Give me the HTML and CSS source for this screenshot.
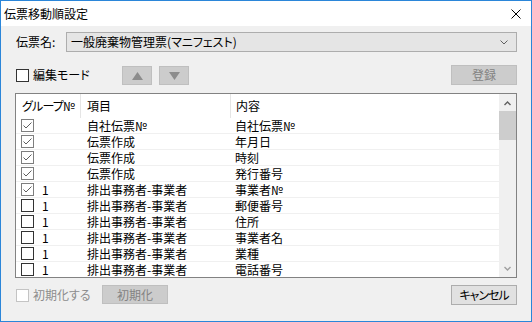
FILE: index.html
```html
<!DOCTYPE html>
<html lang="ja">
<head>
    <meta charset="UTF-8">
    <meta name="viewport" content="width=device-width, initial-scale=1.0">
    <title>伝票移動順設定</title>
    <link rel="stylesheet" href="styles.css">
</head>
<body>
    <div class="window">
        <div class="titlebar">
            <span class="title">伝票移動順設定</span>
            <svg class="close" width="10" height="10" viewBox="0 0 10 10">
                <path d="M0.5 0.5 L9.5 9.5 M9.5 0.5 L0.5 9.5" stroke="#000" stroke-width="1" fill="none"/>
            </svg>
        </div>
        <div class="content">
            <div class="row-name">
                <span class="name-label">伝票名:</span>
                <div class="combo">
                    <span class="palt">一般廃棄物管理票(マニフェスト)</span>
                    <svg class="chevron" width="8" height="5" viewBox="0 0 8 5">
                        <path d="M0.5 0.5 L4 4 L7.5 0.5" stroke="#606060" stroke-width="1" fill="none"/>
                    </svg>
                </div>
            </div>

            <div class="row-tools">
                <label class="check edit-mode"><span class="box"></span><span class="palt">編集モード</span></label>
                <button class="btn-arrow" disabled>
                    <svg width="11" height="8" viewBox="0 0 11 8"><polygon points="5.5,0 11,8 0,8" fill="#8c8c8c"/></svg>
                </button>
                <button class="btn-arrow" disabled>
                    <svg width="11" height="8" viewBox="0 0 11 8"><polygon points="0,0 11,0 5.5,8" fill="#8c8c8c"/></svg>
                </button>
                <button class="btn btn-disabled btn-save" disabled>登録</button>
            </div>

            <div class="list">
                <div class="list-main">
                    <div class="list-head">
                        <div class="cell palt head-group">グループ№</div>
                        <div class="cell">項目</div>
                        <div class="cell">内容</div>
                    </div>
                    <div class="list-body" id="list-body"></div>
                </div>
                <div class="scrollbar">
                    <svg width="7" height="5" viewBox="0 0 7 5"><path d="M0.5 4 L3.5 1 L6.5 4" stroke="#606060" stroke-width="1.4" fill="none"/></svg>
                    <div class="track"><div class="thumb"></div></div>
                    <svg width="7" height="5" viewBox="0 0 7 5"><path d="M0.5 1 L3.5 4 L6.5 1" stroke="#a0a0a0" stroke-width="1.4" fill="none"/></svg>
                </div>
            </div>

            <div class="row-bottom">
                <label class="check check-disabled"><span class="box"></span><span class="palt">初期化する</span></label>
                <button class="btn btn-disabled btn-reset" disabled>初期化</button>
                <button class="btn btn-cancel palt">キャンセル</button>
            </div>
        </div>
    </div>

    <script>
        const rows = [
            [true, '', '自社伝票№', '自社伝票№'],
            [true, '', '伝票作成', '年月日'],
            [true, '', '伝票作成', '時刻'],
            [true, '', '伝票作成', '発行番号'],
            [true, '1', '排出事務者-事業者', '事業者№'],
            [false, '1', '排出事務者-事業者', '郵便番号'],
            [false, '1', '排出事務者-事業者', '住所'],
            [false, '1', '排出事務者-事業者', '事業者名'],
            [false, '1', '排出事務者-事業者', '業種'],
            [false, '1', '排出事務者-事業者', '電話番号']
        ];

        const checkSvg = '<svg width="11" height="11" viewBox="0 0 11 11"><path d="M1.5 5.5 L4 8 L9.5 2.5" stroke="#5e5e5e" stroke-width="1" fill="none"/></svg>';

        const body = document.getElementById('list-body');
        rows.forEach(r => {
            const row = document.createElement('div');
            row.className = 'list-row';
            row.innerHTML =
                '<div class="cell cell-group"><span class="box' + (r[0] ? ' checked' : '') + '">' + (r[0] ? checkSvg : '') + '</span>' + r[1] + '</div>' +
                '<div class="cell">' + r[2] + '</div>' +
                '<div class="cell">' + r[3] + '</div>';
            body.appendChild(row);
        });
    </script>
</body>
</html>
```

FILE: styles.css
```css
* {
    box-sizing: border-box;
}
body {
    margin: 0;
    font-family: "Noto Sans CJK JP", "Noto Sans", sans-serif;
    font-size: 12px;
    color: #000;
    background: #fff;
}
.palt {
    font-feature-settings: "palt";
}
.window {
    width: 532px;
    height: 322px;
    border: 1px solid #2b86d9;
    background: #f0f0f0;
    display: flex;
    flex-direction: column;
}
.titlebar {
    height: 25px;
    background: #fff;
    display: flex;
    align-items: center;
    padding: 0 10px 0 3px;
}
.title {
    flex: 1;
    line-height: 16px;
}
.close {
    display: block;
}
.content {
    padding: 6px 14px 0 14px;
    flex: 1;
    display: flex;
    flex-direction: column;
}
.row-name {
    display: flex;
    align-items: center;
    height: 20px;
}
.name-label {
    width: 51px;
    padding-left: 1px;
    line-height: 16px;
}
.combo {
    flex: 1;
    height: 20px;
    background: #e5e5e5;
    border: 1px solid #adadad;
    display: flex;
    align-items: center;
    padding: 0 8px 0 4px;
    line-height: 16px;
}
.combo span {
    flex: 1;
}
.chevron {
    display: block;
}
.row-tools {
    display: flex;
    align-items: center;
    height: 20px;
    margin-top: 13px;
}
.check {
    display: flex;
    align-items: center;
    line-height: 16px;
    margin-left: 1px;
    white-space: nowrap;
}
.check .box {
    margin-right: 4px;
}
.edit-mode {
    width: 106px;
}
.box {
    width: 13px;
    height: 13px;
    border: 1px solid #333;
    background: #fff;
    display: inline-flex;
    align-items: center;
    justify-content: center;
    flex: none;
}
.box.checked {
    border-color: #7e7e7e;
}
.check-disabled {
    color: #8d8d8d;
}
.check-disabled .box {
    border-color: #c4c4c4;
}
.btn-arrow {
    width: 30px;
    height: 19px;
    margin: 1px 7px 0 0;
    padding: 0;
    background: #cccccc;
    border: 1px solid #bfbfbf;
    display: flex;
    align-items: center;
    justify-content: center;
}
.btn {
    height: 20px;
    width: 66px;
    padding: 0;
    font-family: inherit;
    font-size: 12px;
    line-height: 16px;
    white-space: nowrap;
}
.btn-disabled {
    background: #cccccc;
    border: 1px solid #bfbfbf;
    color: #838383;
}
.btn-save {
    margin-left: auto;
    margin-right: 0;
}
.list {
    margin-top: 8px;
    height: 185px;
    border: 1px solid #828282;
    background: #fff;
    display: flex;
    overflow: hidden;
}
.list-main {
    flex: 1;
    overflow: hidden;
}
.list-head,
.list-row {
    display: grid;
    grid-template-columns: 65px 150px 1fr;
}
.list-head {
    height: 24px;
}
.list-head .cell {
    line-height: 24px;
    border-right: 1px solid #e5e5e5;
    padding-left: 6px;
    white-space: nowrap;
}
.list-head .head-group {
    letter-spacing: -0.8px;
}
.list-head .cell:last-child {
    border-right: none;
    padding-left: 5px;
}
.list-row {
    height: 16px;
    border-bottom: 1px solid #f0f0f0;
}
.list-row .cell {
    line-height: 15px;
    padding-left: 6px;
    white-space: nowrap;
}
.list-row .cell:last-child {
    padding-left: 4px;
}
.list-row .cell-group {
    display: flex;
    align-items: center;
    padding-left: 5px;
}
.cell-group .box {
    margin-right: 8px;
}
.scrollbar {
    width: 17px;
    background: #f0f0f0;
    display: flex;
    flex-direction: column;
    align-items: center;
    padding: 7px 0 6px;
}
.track {
    flex: 1;
    width: 100%;
    padding: 5px 0 0 0;
}
.thumb {
    width: 100%;
    height: 29px;
    background: #cdcdcd;
}
.row-bottom {
    display: flex;
    align-items: center;
    height: 20px;
    margin-top: 7px;
}
.row-bottom .check {
    width: 86px;
}
.btn-reset {
    height: 19px;
    margin-top: -1px;
}
.btn-cancel {
    margin-left: auto;
    background: #e1e1e1;
    border: 1px solid #adadad;
    color: #000;
    letter-spacing: -1px;
}
```
